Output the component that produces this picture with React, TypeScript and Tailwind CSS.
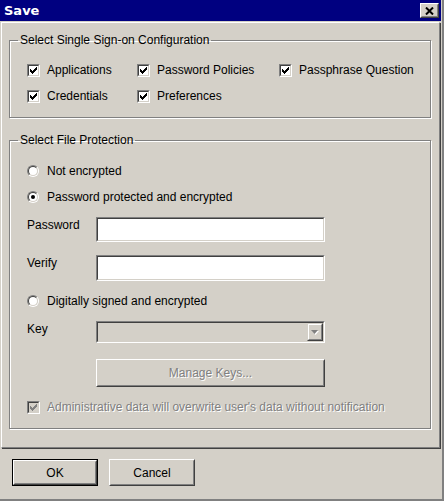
import React from "react"

const sunkenOuter = "border border-t-[#808080] border-l-[#808080] border-b-white border-r-white"
const sunkenInner = "border border-t-[#404040] border-l-[#404040] border-b-[#d4d0c8] border-r-[#d4d0c8]"
const raisedOuter = "border border-t-white border-l-white border-b-[#404040] border-r-[#404040]"
const raisedInner = "border border-t-[#d4d0c8] border-l-[#d4d0c8] border-b-[#808080] border-r-[#808080]"
const disabledText = "text-[#808080] [text-shadow:1px_1px_0_#fff]"

function Check({ disabled }: { disabled?: boolean }) {
  return (
    <div className={`w-[13px] h-[13px] shrink-0 ${sunkenOuter}`}>
      <div className={`w-full h-full flex items-center justify-center ${sunkenInner} ${disabled ? "bg-[#d4d0c8]" : "bg-white"}`}>
        <svg width="7" height="7" viewBox="0 0 7 7" shapeRendering="crispEdges">
          <polygon points="0,2 2,4 7,-1 7,2 2,7 0,5" fill={disabled ? "#808080" : "#000"} />
        </svg>
      </div>
    </div>
  )
}

function CheckItem({ label, disabled }: { label: string; disabled?: boolean }) {
  return (
    <div className="flex items-center h-[14px] gap-[7px]">
      <Check disabled={disabled} />
      <span className={disabled ? disabledText : ""}>{label}</span>
    </div>
  )
}

function Radio({ label, checked }: { label: string; checked?: boolean }) {
  return (
    <div className="flex items-center h-[14px] gap-[8px]">
      <div className={`w-[12px] h-[12px] rounded-full shrink-0 ${sunkenOuter}`}>
        <div className={`w-full h-full rounded-full flex items-center justify-center bg-white ${sunkenInner}`}>
          {checked && <div className="w-[4px] h-[4px] rounded-full bg-black" />}
        </div>
      </div>
      <span>{label}</span>
    </div>
  )
}

function TextBox({ h }: { h: string }) {
  return (
    <div className={`w-[229px] ${h} ${sunkenOuter}`}>
      <div className={`w-full h-full bg-white ${sunkenInner}`} />
    </div>
  )
}

function Group({ title, children, className }: { title: string; children: React.ReactNode; className?: string }) {
  return (
    <fieldset className={`w-[422px] border border-[#808080] shadow-[inset_1px_1px_0_#fff,1px_1px_0_#fff] ${className ?? ""}`}>
      <legend className="ml-[8px] px-[2px] leading-[14px]">{title}</legend>
      {children}
    </fieldset>
  )
}

function Button({ label, isDefault }: { label: string; isDefault?: boolean }) {
  return (
    <div className={`w-[86px] h-[27px] ${isDefault ? "border border-black" : ""}`}>
      <div className={`w-full h-full ${raisedOuter}`}>
        <div className={`w-full h-full flex items-center justify-center ${raisedInner}`}>{label}</div>
      </div>
    </div>
  )
}

export default function App() {
  return (
    <div className="w-[444px] h-[501px] bg-[#d4d0c8] border-r-2 border-b-2 border-[#808080] font-['Liberation_Sans',Arial,sans-serif] text-[12px] leading-[14px] text-black overflow-hidden">
      <div className="w-[441px]">
        {/* title bar */}
        <div className="h-[21px] bg-[#000080] flex items-center justify-between pl-[4px] pr-[2px]">
          <span className="font-['DejaVu_Sans',sans-serif] font-bold text-[13px] text-white">Save</span>
          <div className={`w-[19px] h-[15px] ${raisedOuter}`}>
            <div className={`w-full h-full bg-[#d4d0c8] flex items-center justify-center ${raisedInner}`}>
              <svg width="9" height="8" viewBox="0 0 9 8">
                <path d="M1 0.5 L8 7.5 M8 0.5 L1 7.5" stroke="#000" strokeWidth="2" />
              </svg>
            </div>
          </div>
        </div>

        {/* main panel */}
        <div className="mt-[1px] ml-[1px] w-[439px] border-t border-l border-white border-r border-b border-r-[#808080] border-b-[#808080] shadow-[1px_1px_0_#404040] pt-[10px] pl-[7px] pb-[18px]">
          <Group title="Select Single Sign-on Configuration">
            <div className="pt-[16px] pb-[14px] pl-[17px] grid grid-cols-[110px_142px_1fr] gap-y-[12px]">
              <CheckItem label="Applications" />
              <CheckItem label="Password Policies" />
              <CheckItem label="Passphrase Question" />
              <CheckItem label="Credentials" />
              <CheckItem label="Preferences" />
            </div>
          </Group>

          <Group title="Select File Protection" className="mt-[15px]">
            <div className="pt-[17px] pb-[14px] pl-[17px] flex flex-col">
              <Radio label="Not encrypted" />
              <div className="mt-[12px]">
                <Radio label="Password protected and encrypted" checked />
              </div>
              <div className="mt-[13px] flex">
                <span className="w-[69px] pt-[1px]">Password</span>
                <TextBox h="h-[25px]" />
              </div>
              <div className="mt-[13px] flex">
                <span className="w-[69px] pt-[1px]">Verify</span>
                <TextBox h="h-[26px]" />
              </div>
              <div className="mt-[13px]">
                <Radio label="Digitally signed and encrypted" />
              </div>
              <div className="mt-[13px] flex">
                <span className="w-[69px] pt-[1px]">Key</span>
                <div className={`w-[229px] h-[22px] ${sunkenOuter}`}>
                  <div className={`w-full h-full bg-[#d4d0c8] flex justify-end ${sunkenInner}`}>
                    <div className={`w-[16px] h-full ${raisedOuter.replace("border-t-white border-l-white", "border-t-[#d4d0c8] border-l-[#d4d0c8]")}`}>
                      <div className="w-full h-full border border-t-white border-l-white border-b-[#808080] border-r-[#808080] flex items-center justify-center">
                        <svg width="8" height="5" viewBox="0 0 8 5">
                          <polygon points="1,1 8,1 4.5,5" fill="#fff" />
                          <polygon points="0,0 7,0 3.5,4" fill="#808080" />
                        </svg>
                      </div>
                    </div>
                  </div>
                </div>
              </div>
              <div className="mt-[16px] pl-[69px]">
                <div className={`w-[229px] h-[28px] ${raisedOuter}`}>
                  <div className={`w-full h-full flex items-center justify-center ${raisedInner}`}>
                    <span className={disabledText}>Manage Keys...</span>
                  </div>
                </div>
              </div>
              <div className="mt-[13px]">
                <CheckItem label="Administrative data will overwrite user's data without notification" disabled />
              </div>
            </div>
          </Group>
        </div>

        {/* buttons */}
        <div className="pt-[11px] pl-[12px] flex gap-[11px]">
          <Button label="OK" isDefault />
          <Button label="Cancel" />
        </div>
      </div>
    </div>
  )
}
